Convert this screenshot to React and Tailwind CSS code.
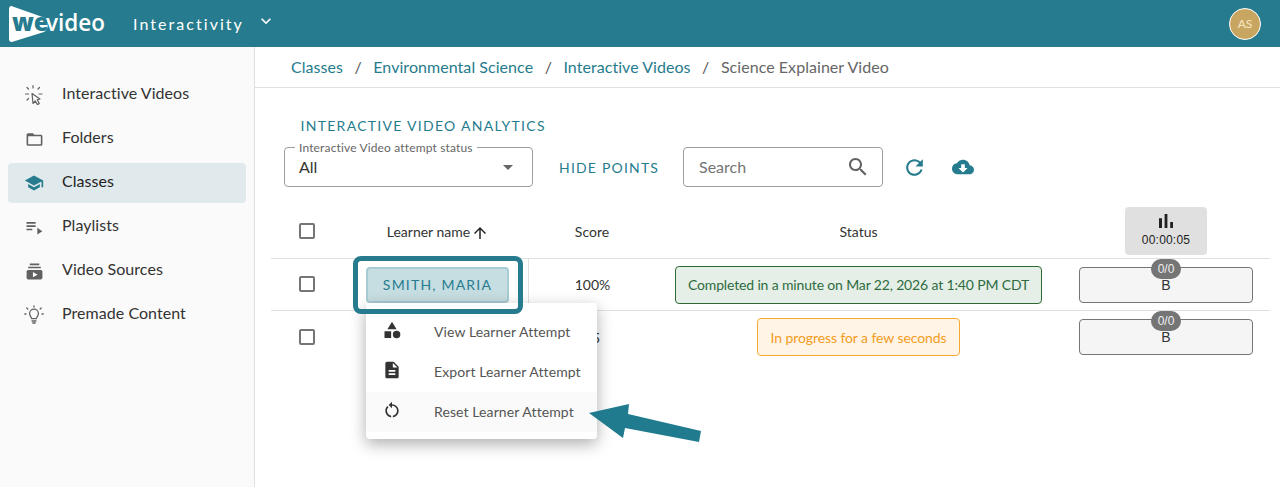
import React from "react";

const P = ({ d, size = 24, className = "", vb = "0 0 24 24" }) => (
  <svg width={size} height={size} viewBox={vb} fill="currentColor" className={className}>
    <path d={d} />
  </svg>
);

const ClickIcon = () => (
  <svg width="20" height="20" viewBox="0 0 20 20" fill="none" stroke="#616161" strokeWidth="1.2" strokeLinecap="round" strokeLinejoin="round">
    <path d="M8 8.5 L9 18.5 L11.2 16 L13.5 19.6 L15.3 18.5 L13.2 14.8 L16 14 Z" />
    <path d="M9 .6V3M3 2.5l1.5 1.5M15.5 2.5 14 4M1.5 9h3M15 9h3M3 15l1.5-1.5" />
  </svg>
);

const BulbIcon = () => (
  <svg width="20" height="20" viewBox="0 0 20 20" fill="none" stroke="#616161" strokeWidth="1.3" strokeLinecap="round" strokeLinejoin="round">
    <path d="M7.6 13.6c0-1.4-2-2.4-2-5a4.4 4.4 0 0 1 8.8 0c0 2.6-2 3.6-2 5z" />
    <path d="M8 16h4M8.8 18h2.4M10 .8v1.2M2.8 3l1 1M17.2 3l-1 1M.8 9H2M18 9h1.2" />
  </svg>
);

const nav = [
  { label: "Interactive Videos", icon: <ClickIcon /> },
  { label: "Folders", icon: <P size={19} d="M20 6h-8l-2-2H4c-1.1 0-1.99.9-1.99 2L2 18c0 1.1.9 2 2 2h16c1.1 0 2-.9 2-2V8c0-1.1-.9-2-2-2zm0 12H4V8h16v10z" /> },
  { label: "Classes", active: true, icon: <P size={20} className="text-[#267c8e]" d="M5 13.18v4L12 21l7-3.82v-4L12 17l-7-3.82zM12 3 1 9l11 6 9-4.91V17h2V9L12 3z" /> },
  { label: "Playlists", icon: <P size={20} d="M3 10h11v2H3zm0-4h11v2H3zm0 8h7v2H3zm13-1v8l6-4z" /> },
  { label: "Video Sources", icon: <P size={19} d="M20 8H4V6h16v2zm-2-6H6v2h12V2zm4 10v8c0 1.1-.9 2-2 2H4c-1.1 0-2-.9-2-2v-8c0-1.1.9-2 2-2h16c1.1 0 2 .9 2 2zm-6 4-6-3.27v6.53L16 16z" /> },
  { label: "Premade Content", icon: <BulbIcon /> },
];

const Check = ({ className = "" }) => <div className={`w-4 h-4 rounded-[2px] border-2 border-[#757575] ${className}`} />;

const Points = () => (
  <div className="relative w-[174px] h-9 rounded border border-[#757575] bg-[#f5f5f5] flex justify-center pt-[8px] text-[14px] leading-[18px] text-[#333] font-['Liberation_Sans',sans-serif]">
    B
    <div className="absolute left-[71px] -top-[9px] w-[30px] h-5 rounded-full bg-[#757575] text-[#f0f0f0] text-[12px] leading-5 text-center">0/0</div>
  </div>
);

const Row = ({ children, border }) => (
  <div className={`flex items-center h-[52px] ${border ? "border-b border-[#e0e0e0]" : ""}`}>{children}</div>
);

export default function App() {
  return (
    <div className="relative w-full h-[487px] overflow-hidden bg-white font-['Lato',sans-serif] text-[#333]">
      <header className="flex items-center h-[47px] bg-[#267c8e] text-white">
        <svg width="110" height="47" viewBox="0 0 110 47" className="ml-[8px] shrink-0">
          <path d="M4 6.2 C2 5.6 1 7.5 1 9.5 L1 39 C1 41.5 3 42.6 5.5 41.6 L36 32 C41 30 41 19.5 36 17.5 Z" fill="#fff" />
          <text x="4" y="31" fontFamily="'Open Sans',sans-serif" fontWeight="800" fontSize="24" fill="#267c8e">we</text>
          <text x="38" y="31" textLength="59" lengthAdjust="spacingAndGlyphs" fontFamily="'Open Sans',sans-serif" fontWeight="600" fontSize="24" fill="#fff">video</text>
        </svg>
        <span className="ml-[15px] text-[16px] tracking-[2.05px] font-normal">Interactivity</span>
        <P size={20} className="ml-[12px] -mt-[5px]" d="M16.59 8.59 12 13.17 7.41 8.59 6 10l6 6 6-6z" />
        <div className="ml-auto mr-[19px] w-8 h-8 rounded-full bg-[#c8a662] border border-white flex items-center justify-center text-[12px] text-[#f6e6c4]">AS</div>
      </header>

      <div className="flex h-[440px]">
        <aside className="w-[255px] shrink-0 bg-[#fafafa] border-r border-[#e0e0e0] pt-[28px]">
          {nav.map((n) => (
            <div key={n.label} className={`flex items-center h-10 mx-2 mb-1 rounded pl-4 text-[16px] tracking-[0.05px] ${n.active ? "bg-[#e0eaec] text-[#222]" : "text-[#333]"}`}>
              <span className="w-5 h-5 flex items-center justify-center text-[#616161]">{n.icon}</span>
              <span className="ml-[18px] -translate-y-[2px]">{n.label}</span>
            </div>
          ))}
        </aside>

        <main className="flex-1 min-w-0">
          <nav className="flex items-center h-[41px] border-b border-[#e0e0e0] pl-9 text-[16px] tracking-[0.05px] text-[#267c8e]">
            <span>Classes</span>
            <span className="mx-[11.5px] text-[#555]">/</span>
            <span>Environmental Science</span>
            <span className="mx-[11.5px] text-[#555]">/</span>
            <span>Interactive Videos</span>
            <span className="mx-[11.5px] text-[#555]">/</span>
            <span className="text-[#666]">Science Explainer Video</span>
          </nav>

          <div className="pl-[45.5px] mt-7 h-5 text-[14px] leading-5 tracking-[1.28px] text-[#267c8e]">INTERACTIVE VIDEO ANALYTICS</div>

          <div className="flex items-center mt-[11px] pl-[29px] h-10">
            <div className="relative w-[249px] h-10 rounded border border-[#9e9e9e] flex items-center pl-[14px] text-[16px] text-[#333]">
              All
              <span className="absolute left-[10px] -top-[7px] bg-white px-1 text-[12px] leading-[14px] tracking-[0.15px] text-[#666]">Interactive Video attempt status</span>
              <P size={24} className="absolute right-[12px] top-[7px] text-[#666]" d="m7 10 5 5 5-5z" />
            </div>
            <span className="ml-[26px] w-[100px] text-[14px] tracking-[1.2px] text-[#267c8e] whitespace-nowrap">HIDE POINTS</span>
            <div className="ml-6 w-[200px] h-10 rounded border border-[#9e9e9e] flex items-center pl-[15px] pr-[12px] justify-between text-[16px] text-[#757575]">
              Search
              <P size={24} className="text-[#616161]" d="M15.5 14h-.79l-.28-.27C15.41 12.59 16 11.11 16 9.5 16 5.91 13.09 3 9.5 3S3 5.91 3 9.5 5.91 16 9.5 16c1.61 0 3.09-.59 4.23-1.57l.27.28v.79l5 4.99L20.49 19l-4.99-5zm-6 0C7.01 14 5 11.99 5 9.5S7.01 5 9.5 5 14 7.01 14 9.5 11.99 14 9.5 14z" />
            </div>
            <P size={25} className="ml-[19px] text-[#267c8e]" d="M17.65 6.35C16.2 4.9 14.21 4 12 4c-4.42 0-7.99 3.58-7.99 8s3.57 8 7.99 8c3.73 0 6.84-2.55 7.73-6h-2.08c-.82 2.33-3.04 4-5.65 4-3.31 0-6-2.69-6-6s2.69-6 6-6c1.66 0 3.14.69 4.22 1.78L13 11h7V4l-2.35 2.35z" />
            <P size={22} className="ml-[25px] text-[#267c8e]" d="M19.35 10.04C18.67 6.59 15.64 4 12 4 9.11 4 6.6 5.64 5.35 8.04 2.34 8.36 0 10.91 0 14c0 3.31 2.69 6 6 6h13c2.76 0 5-2.24 5-5 0-2.64-2.05-4.78-4.65-4.96zM17 13l-5 5-5-5h3V9h4v4h3z" />
          </div>

          <div className="ml-4 mr-[10px] mt-5 text-[14px]">
            <div className="flex items-center h-[52px] border-b border-[#e0e0e0] pb-[3px]">
              <div className="w-[72px] flex justify-center"><Check /></div>
              <div className="w-[186px] flex justify-center items-center pl-1">
                Learner name
                <P size={18} className="ml-[1px] mt-[4px] text-[#222]" d="M4 12l1.41 1.41L11 7.83V20h2V7.83l5.58 5.59L20 12l-8-8-8 8z" />
              </div>
              <div className="w-[126px] text-center">Score</div>
              <div className="w-[407px] text-center">Status</div>
              <div className="w-[208px] flex justify-center">
                <div className="w-[82px] h-12 rounded bg-[#e0e0e0] flex flex-col items-center text-[12px] leading-[14px] tracking-[0.2px] text-[#222] font-['Liberation_Sans',sans-serif]">
                  <P size={24} className="mt-[2px] text-[#222]" d="M5 9.2h3V19H5zM10.6 5h2.8v14h-2.8zm5.6 8H19v6h-2.8z" />
                  <span>00:00:05</span>
                </div>
              </div>
            </div>

            <Row border>
              <div className="w-[72px] flex justify-center"><Check className="-translate-y-px" /></div>
              <div className="w-[186px] h-full flex items-center pl-[23px] border-r border-[#e0e0e0]">
                <div className="w-[143px] h-9 rounded border-2 border-[#a8ccd3] bg-[#c6dde2] flex items-center justify-center text-[14px] tracking-[1.2px] text-[#267c8e]">SMITH, MARIA</div>
              </div>
              <div className="w-[126px] pl-px text-center">100%</div>
              <div className="w-[407px] flex justify-center">
                <div className="w-[367px] h-[38px] rounded border border-[#2e6b34] bg-[#e5efe7] flex items-center justify-center tracking-[-0.15px] text-[#2e6b3f] whitespace-nowrap">Completed in a minute on Mar 22, 2026 at 1:40 PM CDT</div>
              </div>
              <div className="w-[208px] flex justify-center"><Points /></div>
            </Row>

            <Row>
              <div className="w-[72px] flex justify-center"><Check /></div>
              <div className="w-[186px]" />
              <div className="w-[126px] text-center">15</div>
              <div className="w-[407px] flex justify-center">
                <div className="w-[203px] h-[38px] rounded border border-[#f7a933] bg-[#fff4e5] flex items-center justify-center tracking-[-0.08px] text-[#f39c1f] whitespace-nowrap">In progress for a few seconds</div>
              </div>
              <div className="w-[208px] flex justify-center"><Points /></div>
            </Row>
          </div>
        </main>
      </div>

      <div className="absolute left-[366px] top-[303px] w-[231px] h-[136px] bg-white rounded shadow-[0_5px_16px_rgba(0,0,0,0.32)] pt-[9px] text-[14px] tracking-[0.1px] text-[#555]">
        {[
          ["View Learner Attempt", "M12 2l-5.5 9h11zM17.5 13a4.5 4.5 0 1 0 0 9 4.5 4.5 0 0 0 0-9zM3 13.5h8v8H3z", false],
          ["Export Learner Attempt", "M14 2H6c-1.1 0-1.99.9-1.99 2L4 20c0 1.1.89 2 1.99 2H18c1.1 0 2-.9 2-2V8l-6-6zm2 16H8v-2h8v2zm0-4H8v-2h8v2zm-3-5V3.5L18.5 9H13z", false],
          ["Reset Learner Attempt", "M12 5V2L8 6l4 4V7c3.31 0 6 2.69 6 6 0 2.97-2.17 5.43-5 5.91v2.02c3.95-.49 7-3.86 7-7.93 0-4.42-3.58-8-8-8zm-6 8c0-1.65.67-3.15 1.76-4.24L6.34 7.34C4.9 8.79 4 10.79 4 13c0 4.07 3.05 7.44 7 7.93v-2.02c-2.83-.48-5-2.94-5-5.91z", true],
        ].map(([t, d, hi]) => (
          <div key={t} className={`flex items-center h-10 pl-4 ${hi ? "bg-[#fafafa]" : ""}`}>
            <P size={20} className="text-[#333] -translate-y-[2px]" d={d} />
            <span className="ml-[32px] -translate-y-px">{t}</span>
          </div>
        ))}
      </div>

      <div className="absolute left-[353px] top-[256px] w-[170px] h-[58px] rounded-[8px] border-[5px] border-[#267c8e]" />

      <svg width="120" height="50" viewBox="0 0 120 50" className="absolute left-[585px] top-[400px]">
        <path d="M4 13 L44 4 L43 14 L116 31 L114 42 L40 28 L38 38 Z" fill="#1f7b8d" />
      </svg>
    </div>
  );
}
